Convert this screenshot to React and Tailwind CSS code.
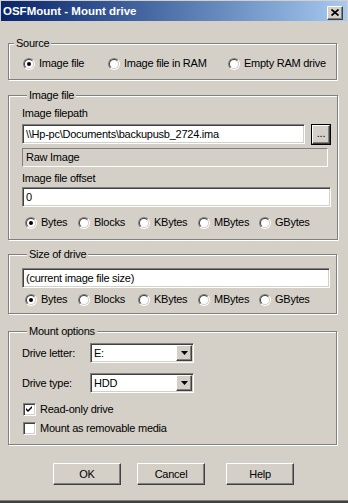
import React from 'react';

// Win2000-style 3D edges
const raised =
  'border border-t-white border-l-white border-r-[#404040] border-b-[#404040] shadow-[inset_-1px_-1px_0_#808080] bg-[#d4d0c8]';
const sunken =
  'border border-t-[#808080] border-l-[#808080] border-r-white border-b-white shadow-[inset_1px_1px_0_#404040,inset_-1px_-1px_0_#d4d0c8]';

const Radio = ({ checked }) => (
  <span className="w-[12px] h-[12px] flex-none flex rounded-full border border-t-[#808080] border-l-[#808080] border-r-white border-b-white">
    <span className="flex-1 flex items-center justify-center rounded-full border border-t-[#404040] border-l-[#404040] border-r-[#d4d0c8] border-b-[#d4d0c8] bg-white">
      {checked && <span className="w-[4px] h-[4px] rounded-full bg-black" />}
    </span>
  </span>
);

const RadioItem = ({ label, checked, width }) => (
  <div className={`flex items-center gap-[4px] ${width}`}>
    <Radio checked={checked} />
    <span>{label}</span>
  </div>
);

const Checkbox = ({ label, checked, className }) => (
  <div className={`flex items-center gap-[4px] ml-[1px] ${className}`}>
    <span className={`w-[13px] h-[13px] flex-none flex items-center justify-center bg-white ${sunken}`}>
      {checked && (
        <svg width="7" height="7" viewBox="0 0 7 7">
          <path d="M0 2 L2 4 L6 0 L6 2 L2 6 L0 4 Z" fill="black" />
        </svg>
      )}
    </span>
    <span>{label}</span>
  </div>
);

const GroupBox = ({ title, className, children }) => (
  <fieldset className={`border border-[#808080] shadow-[1px_1px_0_#fff,inset_1px_1px_0_#fff] ${className}`}>
    <legend className="ml-[5px] px-[2px] leading-[13px] bg-[#d4d0c8]">{title}</legend>
    {children}
  </fieldset>
);

const Field = ({ children, className }) => (
  <div className={`bg-white flex items-center pl-[3px] ${sunken} ${className}`}>{children}</div>
);

const UnitRow = ({ className }) => (
  <div className={`flex items-center ml-[3px] ${className}`}>
    <RadioItem label="Bytes" checked width="w-[53px]" />
    <RadioItem label="Blocks" width="w-[60px]" />
    <RadioItem label="KBytes" width="w-[60px]" />
    <RadioItem label="MBytes" width="w-[61px]" />
    <RadioItem label="GBytes" width="w-[60px]" />
  </div>
);

const Combo = ({ value }) => (
  <div className={`w-[104px] h-[20px] bg-white flex items-center ${sunken} p-[1px]`}>
    <span className="flex-1 pl-[2px]">{value}</span>
    <span className={`w-[16px] h-full flex items-center justify-center ${raised}`}>
      <svg width="7" height="4" viewBox="0 0 7 4">
        <path d="M0 0 H7 L3.5 4 Z" fill="black" />
      </svg>
    </span>
  </div>
);

const Button = ({ label, className }) => (
  <div className={`w-[68px] h-[22px] flex items-center justify-center ${raised} ${className}`}>{label}</div>
);

export default function App() {
  return (
    <div className="w-[348px] h-[503px] bg-[#d4d0c8] flex flex-col font-['Liberation_Sans',Arial,sans-serif] text-[11px] leading-[13px] tracking-[-0.25px] text-black border-b-2 border-b-[#404040] shadow-[inset_0_-1px_0_#808080]">
      {/* title bar */}
      <div className="mx-[1px] mt-[1px] h-[20px] flex items-center pl-[2px] pr-[4px] bg-linear-to-r from-[#0a246a] to-[#a6caf0]">
        <span className="font-bold text-white text-[11.5px] tracking-normal">OSFMount - Mount drive</span>
        <span className={`ml-auto mt-[3px] w-[16px] h-[14px] flex items-center justify-center ${raised}`}>
          <svg width="8" height="7" viewBox="0 0 8 7">
            <path d="M0.5 0.5 L7.5 6.5 M7.5 0.5 L0.5 6.5" stroke="black" strokeWidth="1.7" />
          </svg>
        </span>
      </div>

      <div className="flex flex-col pl-[8px] pr-[11px]">
        <GroupBox title="Source" className="mt-[16px] pt-[7px] pb-[9px]">
          <div className="flex items-center pl-[14px]">
            <RadioItem label="Image file" checked width="w-[85px]" />
            <RadioItem label="Image file in RAM" width="w-[120px]" />
            <RadioItem label="Empty RAM drive" />
          </div>
        </GroupBox>

        <GroupBox title="Image file" className="mt-[9px] pt-[5px] pb-[10px] pl-[13px] pr-[6px]">
          <div>Image filepath</div>
          <div className="flex items-start mt-[4px]">
            <Field className="w-[283px] h-[20px]">{'\\\\Hp-pc\\Documents\\backupusb_2724.ima'}</Field>
            <div className="ml-[6px] w-[20px] h-[21px] flex border border-black">
              <div className={`flex-1 flex items-end justify-center pb-[3px] ${raised}`}>...</div>
            </div>
          </div>
          <div className={`mt-[3px] h-[19px] w-[306px] flex items-center pl-[3px] ${sunken} shadow-none`}>
            Raw Image
          </div>
          <div className="mt-[5px]">Image file offset</div>
          <Field className="mt-[2px] h-[20px]">0</Field>
          <UnitRow className="mt-[9px]" />
        </GroupBox>

        <GroupBox title="Size of drive" className="mt-[8px] pt-[7px] pb-[7px] pl-[13px] pr-[6px]">
          <Field className="h-[20px]">(current image file size)</Field>
          <UnitRow className="mt-[5px]" />
        </GroupBox>

        <GroupBox title="Mount options" className="mt-[11px] pt-[5px] pb-[9px] pl-[13px] pr-[6px]">
          <div className="flex items-center">
            <span className="w-[68px]">Drive letter:</span>
            <Combo value="E:" />
          </div>
          <div className="flex items-center mt-[10px]">
            <span className="w-[68px]">Drive type:</span>
            <Combo value="HDD" />
          </div>
          <Checkbox label="Read-only drive" checked className="mt-[10px]" />
          <Checkbox label="Mount as removable media" className="mt-[6px]" />
        </GroupBox>

        <div className="flex mt-[18px]">
          <Button label="OK" className="ml-[45px]" />
          <Button label="Cancel" className="ml-[16px]" />
          <Button label="Help" className="ml-[21px]" />
        </div>
      </div>
    </div>
  );
}
